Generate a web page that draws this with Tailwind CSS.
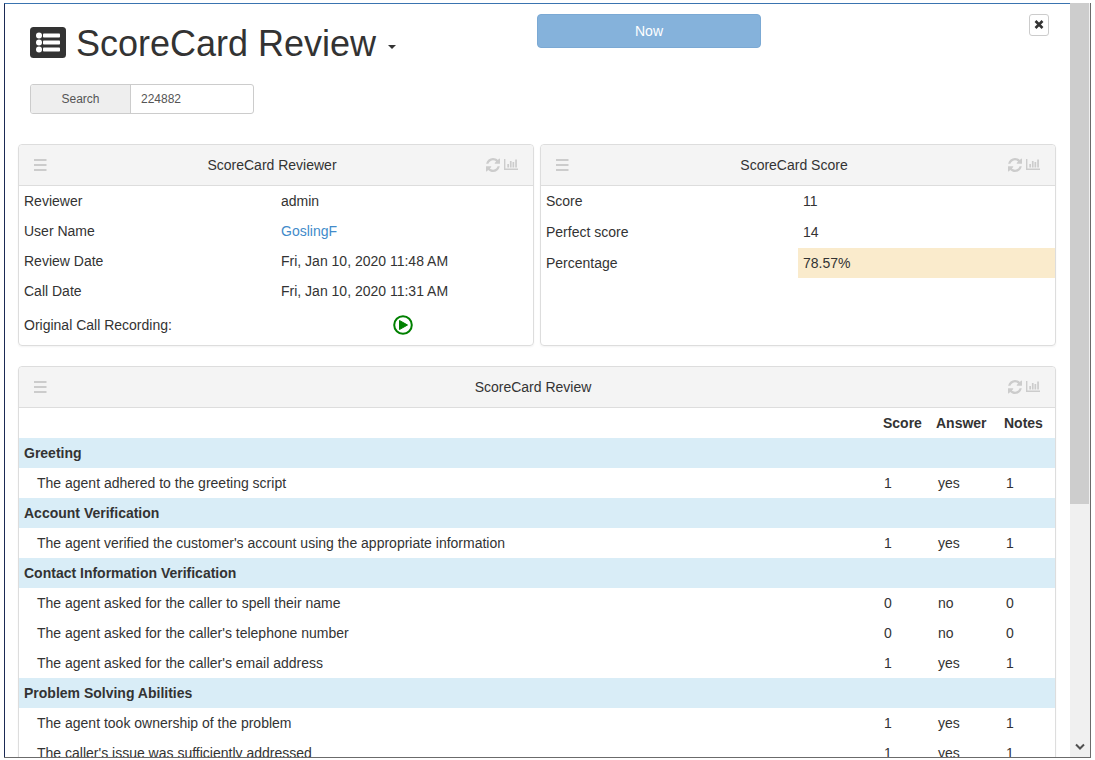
<!DOCTYPE html>
<html lang="en">
<head>
<meta charset="utf-8">
<title>ScoreCard Review</title>
<script src="https://cdn.jsdelivr.net/npm/@tailwindcss/browser@4"></script>
</head>
<body class="h-screen overflow-hidden bg-white pt-[3px] pr-1 pb-[2px] pl-1 font-['Liberation_Sans',Arial,sans-serif] text-sm leading-5 text-[#333]">
<svg class="hidden" aria-hidden="true">
  <symbol id="bars" viewBox="0 0 13 12"><path fill="currentColor" d="M0 0h12.500v2H0zM0 5h12.500v2H0zM0 10h12.500v2H0z"/></symbol>
  <symbol id="refresh" viewBox="0 128 1536 1536"><path fill="currentColor" d="M1511 1056q0 5-1 7-64 268-268 434.500t-478 166.500q-146 0-282.500-55t-243.500-157l-129 129q-19 19-45 19t-45-19-19-45v-448q0-26 19-45t45-19h448q26 0 45 19t19 45-19 45l-137 137q71 66 161 102t187 36q134 0 250-65t186-179q11-17 53-117 8-23 30-23h192q13 0 22.500 9.500t9.500 22.500zM1536 256v448q0 26-19 45t-45 19h-448q-26 0-45-19t-19-45 19-45l138-138q-148-137-349-137-134 0-250 65t-186 179q-11 17-53 117-8 23-30 23h-199q-13 0-22.500-9.500t-9.500-22.500v-7q65-268 270-434.500t480-166.500q146 0 284 55.500t245 156.500l130-129q19-19 45-19t45 19 19 45z"/></symbol>
  <symbol id="chart" viewBox="0 0 14 12"><path fill="currentColor" d="M0 0h1.400v9.600H14V11H0zM3.300 5H5v3.500H3.300zM5.900 2h1.700v6.500H5.900zM8.500 3h1.700v5.500H8.500zM11.200.5h1.700v8h-1.700z"/></symbol>
</svg>
<div class="flex h-full border-r border-b border-[#6b6b6b]">
  <main class="min-w-0 flex-1 overflow-hidden border-t border-l border-t-[#3a74b0] border-l-[#1b2a55] pr-[14px] pl-[13px]">
    <header class="grid grid-cols-2 items-start pt-[10px]">
      <div class="flex items-center pt-2 pl-3">
        <svg class="h-8 w-9 shrink-0" viewBox="0 0 36 32" aria-hidden="true"><rect width="36" height="31" rx="3.500" fill="#333"/><g fill="#fff"><circle cx="9" cy="8.500" r="3"/><circle cx="9" cy="15.500" r="3"/><circle cx="9" cy="22.500" r="3"/><rect x="13" y="6.500" width="17" height="4" rx=".8"/><rect x="13" y="13.500" width="17" height="4" rx=".8"/><rect x="13" y="20.500" width="17" height="4" rx=".8"/></g></svg>
        <h1 class="ml-[10px] pt-[2px] text-4xl whitespace-nowrap">ScoreCard Review</h1>
        <button type="button" aria-label="Choose a page" class="ml-3 pt-2"><svg class="h-1 w-2" viewBox="0 0 8 4"><path fill="#333" d="M0 0h8L4 4z"/></svg></button>
      </div>
      <div class="flex items-start justify-between pr-[7px]">
        <button type="button" class="h-[34px] w-[224px] rounded border border-[#7ba9d4] bg-[#85b2db] text-white">Now</button>
        <button type="button" aria-label="Close" class="flex h-[22px] w-5 items-center justify-center rounded-[3px] border border-[#ccc] bg-white"><svg class="size-[10px]" viewBox="0 0 10 10"><path d="M1.500 1l7 7M8.500 1l-7 7" stroke="#333" stroke-width="2.600"/></svg></button>
      </div>
    </header>
    <form class="mt-5 ml-3 flex h-[30px] w-[224px] overflow-hidden rounded-[3px] border border-[#ccc] text-xs text-[#555]">
      <label for="search" class="flex w-[100px] shrink-0 items-center justify-center border-r border-[#ccc] bg-[#eee]">Search</label>
      <input id="search" type="text" value="224882" class="min-w-0 flex-1 px-[10px] outline-none">
    </form>

    <div class="mt-[30px] grid grid-cols-2 gap-[6px]">
      <section class="rounded border border-[#ddd] shadow-xs">
        <div class="flex h-[41px] items-center rounded-t border-b border-[#ddd] bg-[#f4f4f4] px-[15px]">
          <div class="flex w-8 text-[#ccc]"><button type="button" aria-label="Menu"><svg class="h-3 w-[13px]"><use href="#bars"/></svg></button></div>
          <h2 class="flex-1 text-center">ScoreCard Reviewer</h2>
          <div class="flex w-10 items-center justify-end gap-1 text-[#ccc]"><button type="button" aria-label="Refresh"><svg class="size-[14px]"><use href="#refresh"/></svg></button><button type="button" aria-label="Chart"><svg class="h-3 w-[14px]"><use href="#chart"/></svg></button></div>
        </div>
        <table class="mb-[2px] w-full table-fixed">
          <tr class="h-[30px]"><th class="px-[5px] text-left font-normal">Reviewer</th><td class="px-[5px]">admin</td></tr>
          <tr class="h-[30px]"><th class="px-[5px] text-left font-normal">User Name</th><td class="px-[5px]"><a href="#" class="text-[#428bca]">GoslingF</a></td></tr>
          <tr class="h-[30px]"><th class="px-[5px] text-left font-normal">Review Date</th><td class="px-[5px]">Fri, Jan 10, 2020 11:48 AM</td></tr>
          <tr class="h-[30px]"><th class="px-[5px] text-left font-normal">Call Date</th><td class="px-[5px]">Fri, Jan 10, 2020 11:31 AM</td></tr>
          <tr class="h-[37px]"><th class="px-[5px] text-left font-normal">Original Call Recording:</th><td class="pr-[3px]"><button type="button" aria-label="Play recording" class="mx-auto block"><svg class="size-5" viewBox="0 0 20 20"><circle cx="10" cy="10" r="8.800" fill="none" stroke="#008000" stroke-width="2"/><path fill="#008000" stroke="#008000" stroke-linejoin="round" d="M6.500 5.500v9l8-4.500z"/></svg></button></td></tr>
        </table>
      </section>
      <section class="rounded border border-[#ddd] shadow-xs">
        <div class="flex h-[41px] items-center rounded-t border-b border-[#ddd] bg-[#f4f4f4] px-[15px]">
          <div class="flex w-8 text-[#ccc]"><button type="button" aria-label="Menu"><svg class="h-3 w-[13px]"><use href="#bars"/></svg></button></div>
          <h2 class="flex-1 text-center">ScoreCard Score</h2>
          <div class="flex w-10 items-center justify-end gap-1 text-[#ccc]"><button type="button" aria-label="Refresh"><svg class="size-[14px]"><use href="#refresh"/></svg></button><button type="button" aria-label="Chart"><svg class="h-3 w-[14px]"><use href="#chart"/></svg></button></div>
        </div>
        <table class="w-full table-fixed">
          <tr class="h-[30px]"><th class="px-[5px] text-left font-normal">Score</th><td class="px-[5px]">11</td></tr>
          <tr class="h-[32px]"><th class="px-[5px] text-left font-normal">Perfect score</th><td class="px-[5px]">14</td></tr>
          <tr class="h-[30px]"><th class="px-[5px] text-left font-normal">Percentage</th><td class="bg-[#faebcc] px-[5px]">78.57%</td></tr>
        </table>
      </section>
    </div>

    <section class="mt-5 rounded border border-[#ddd] shadow-xs">
      <div class="flex h-[41px] items-center rounded-t border-b border-[#ddd] bg-[#f4f4f4] px-[15px]">
        <div class="flex w-8 text-[#ccc]"><button type="button" aria-label="Menu"><svg class="h-3 w-[13px]"><use href="#bars"/></svg></button></div>
        <h2 class="flex-1 text-center">ScoreCard Review</h2>
        <div class="flex w-10 items-center justify-end gap-1 text-[#ccc]"><button type="button" aria-label="Refresh"><svg class="size-[14px]"><use href="#refresh"/></svg></button><button type="button" aria-label="Chart"><svg class="h-3 w-[14px]"><use href="#chart"/></svg></button></div>
      </div>
      <table class="w-full table-fixed">
        <colgroup><col><col class="w-[53px]"><col class="w-[68px]"><col class="w-[56px]"></colgroup>
        <thead><tr class="h-[30px] text-left"><td></td><th class="pl-[5px]">Score</th><th class="pl-[5px]">Answer</th><th class="pl-[5px]">Notes</th></tr></thead>
        <tbody>
          <tr class="h-[30px] bg-[#d9edf7]"><th colspan="4" class="pl-[5px] text-left">Greeting</th></tr>
          <tr class="h-[30px]"><td class="pl-[18px]">The agent adhered to the greeting script</td><td class="pl-[6px]">1</td><td class="pl-[7px]">yes</td><td class="pl-[7px]">1</td></tr>
          <tr class="h-[30px] bg-[#d9edf7]"><th colspan="4" class="pl-[5px] text-left">Account Verification</th></tr>
          <tr class="h-[30px]"><td class="pl-[18px]">The agent verified the customer's account using the appropriate information</td><td class="pl-[6px]">1</td><td class="pl-[7px]">yes</td><td class="pl-[7px]">1</td></tr>
          <tr class="h-[30px] bg-[#d9edf7]"><th colspan="4" class="pl-[5px] text-left">Contact Information Verification</th></tr>
          <tr class="h-[30px]"><td class="pl-[18px]">The agent asked for the caller to spell their name</td><td class="pl-[6px]">0</td><td class="pl-[7px]">no</td><td class="pl-[7px]">0</td></tr>
          <tr class="h-[30px]"><td class="pl-[18px]">The agent asked for the caller's telephone number</td><td class="pl-[6px]">0</td><td class="pl-[7px]">no</td><td class="pl-[7px]">0</td></tr>
          <tr class="h-[30px]"><td class="pl-[18px]">The agent asked for the caller's email address</td><td class="pl-[6px]">1</td><td class="pl-[7px]">yes</td><td class="pl-[7px]">1</td></tr>
          <tr class="h-[30px] bg-[#d9edf7]"><th colspan="4" class="pl-[5px] text-left">Problem Solving Abilities</th></tr>
          <tr class="h-[30px]"><td class="pl-[18px]">The agent took ownership of the problem</td><td class="pl-[6px]">1</td><td class="pl-[7px]">yes</td><td class="pl-[7px]">1</td></tr>
          <tr class="h-[30px]"><td class="pl-[18px]">The caller's issue was sufficiently addressed</td><td class="pl-[6px]">1</td><td class="pl-[7px]">yes</td><td class="pl-[7px]">1</td></tr>
        </tbody>
      </table>
    </section>
  </main>
  <div class="flex w-5 flex-col justify-between bg-[#f0f0f0]" aria-hidden="true">
    <div class="h-[501px] w-[19px] bg-[#cdcdcd]"></div>
    <svg class="mx-auto mb-1 h-3 w-[10px]" viewBox="0 0 10 12"><path d="M1 3.500l4 4 4-4" fill="none" stroke="#505050" stroke-width="2"/></svg>
  </div>
</div>
</body>
</html>
